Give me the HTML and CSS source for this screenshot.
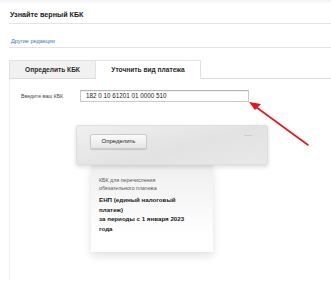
FILE: index.html
```html
<!DOCTYPE html>
<html lang="ru">
<head>
<meta charset="utf-8">
<link rel="stylesheet" href="styles.css">
</head>
<body>
<div class="page">
  <div class="head">Узнайте верный КБК</div>
  <div class="links"><a class="link" href="#">Другие редакции</a></div>
  <div class="tabs">
    <div class="tab">Определить КБК</div>
    <div class="tab active">Уточнить вид платежа</div>
    <div class="tab-rest"></div>
  </div>
  <div class="box">
    <div class="form-row">
      <span class="label">Введите ваш КБК</span>
      <div class="input">182 0 10 61201 01 0000 510</div>
    </div>
    <div class="machine">
      <div class="panel">
        <div class="btn">Определить</div>
        <div class="slot"></div>
      </div>
      <div class="paper">
        <div class="small">КБК для перечисления<br>обязательного платежа</div>
        <div class="result">ЕНП (единый налоговый<br>платеж)<br>за периоды с 1 января 2023<br>года</div>
      </div>
    </div>
  </div>
</div>
<svg class="arrow" width="331" height="283" viewBox="0 0 331 283">
  <line x1="308" y1="145" x2="256" y2="107" stroke="#e8141b" stroke-width="1.6" stroke-linecap="round"/>
  <polygon points="249,102 261,104 255,110" fill="#e8141b"/>
</svg>
</body>
</html>
```

FILE: styles.css
```css
html, body {
  margin: 0;
  padding: 0;
  background: #fff;
  width: 331px;
  height: 283px;
  overflow: hidden;
}
body {
  font-family: "Liberation Sans", Arial, sans-serif;
  color: #222;
  position: relative;
  background: linear-gradient(#f3f3f3, #fff 4px);
}
.page {
  padding-left: 9px;
}
.head {
  height: 24px;
  box-sizing: border-box;
  padding: 10px 0 0 1px;
  font-size: 7.2px;
  font-weight: bold;
  line-height: 9px;
  color: #1a1a1a;
  border-bottom: 1px solid #e3e3e3;
}
.links {
  height: 24px;
  box-sizing: border-box;
  padding: 10px 0 0 2px;
  line-height: 8px;
  border-bottom: 1px solid #e3e3e3;
}
.link {
  font-size: 5.6px;
  color: #3a6fc4;
  text-decoration: none;
}
.tabs {
  display: flex;
  margin-top: 12px;
  height: 19px;
}
.tab {
  box-sizing: border-box;
  height: 19px;
  border: 1px solid #e2e2e2;
  border-bottom: 1px solid #dcdcdc;
  background: #f1f1f1;
  font-size: 6.6px;
  font-weight: bold;
  line-height: 17px;
  color: #2a2a2a;
  text-align: center;
  width: 87px;
}
.tab.active {
  background: #fff;
  border-left: 0;
  border-bottom-color: #fff;
  width: 105px;
}
.tab-rest {
  flex: 1;
  border-bottom: 1px solid #dcdcdc;
}
.box {
  border-left: 1px solid #efefef;
  height: 201px;
}
.form-row {
  display: flex;
  align-items: center;
  padding: 11px 0 0 11px;
}
.label {
  font-size: 5.2px;
  color: #444;
  width: 59px;
}
.input {
  box-sizing: border-box;
  width: 169px;
  height: 12px;
  border: 1px solid #c9c9c9;
  border-top-color: #b5b5b5;
  box-shadow: inset 0 1px 1px rgba(0,0,0,0.06);
  font-size: 6.3px;
  line-height: 10px;
  padding-left: 5px;
  color: #222;
}
.machine {
  margin: 23px 0 0 66px;
  width: 192px;
}
.panel {
  position: relative;
  box-sizing: border-box;
  height: 40px;
  border: 1px solid #dedede;
  border-radius: 2px;
  background: linear-gradient(165deg, #f0f0f0, #e2e2e2 55%, #e8e8e8);
  box-shadow: 0 2px 4px rgba(0,0,0,0.14);
  padding: 8px 0 0 13px;
  z-index: 1;
}
.btn {
  box-sizing: border-box;
  width: 57px;
  height: 15px;
  border: 1px solid #cbcbcb;
  border-radius: 2px;
  background: linear-gradient(#fbfbfb, #e6e6e6);
  box-shadow: 0 1px 1px rgba(0,0,0,0.15);
  font-size: 6px;
  line-height: 13px;
  text-align: center;
  color: #222;
}
.slot {
  position: absolute;
  right: 15px;
  top: 9px;
  width: 8px;
  height: 1px;
  background: #cccccc;
}
.paper {
  box-sizing: border-box;
  margin-left: 15px;
  width: 122px;
  height: 87px;
  background: linear-gradient(#efefef, #fff 80%);
  box-shadow: 0 4px 8px rgba(0,0,0,0.12);
  padding: 11px 0 0 8px;
}
.small {
  font-size: 5.3px;
  line-height: 8px;
  color: #555;
}
.result {
  margin-top: 3px;
  font-size: 6.2px;
  font-weight: bold;
  line-height: 9.5px;
  color: #1a1a1a;
}
.arrow {
  position: absolute;
  left: 0;
  top: 0;
  pointer-events: none;
}
```
